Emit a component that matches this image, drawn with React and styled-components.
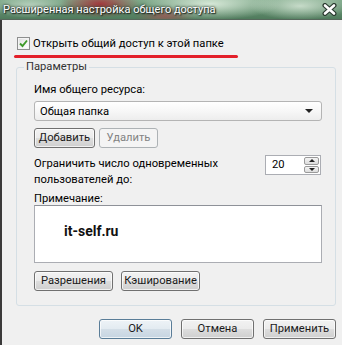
import React from "react";
import styled, { createGlobalStyle, css } from "styled-components";

const GlobalStyle = createGlobalStyle`
  html, body {
    margin: 0;
    padding: 0;
    background: #f0f0f0;
  }
  body {
    font-family: Roboto, "Noto Sans", "Liberation Sans", sans-serif;
    font-size: 11.2px;
    color: #000;
  }
`;

const Window = styled.div`
  width: 342px;
  height: 345px;
  display: flex;
  flex-direction: column;
  overflow: hidden;
`;

const TitleBar = styled.div`
  height: 19px;
  border-bottom: 1px solid #56675b;
  display: flex;
  align-items: center;
  justify-content: space-between;
  padding: 0 5px 0 3px;
  background:
    radial-gradient(ellipse 40px 14px at 100px 4px, rgba(170, 40, 50, 0.85), transparent),
    radial-gradient(ellipse 30px 10px at 165px 16px, rgba(190, 70, 80, 0.55), transparent),
    radial-gradient(ellipse 70px 16px at 210px 4px, rgba(225, 240, 225, 0.9), transparent),
    radial-gradient(ellipse 50px 14px at 300px 6px, rgba(220, 235, 220, 0.8), transparent),
    radial-gradient(ellipse 40px 12px at 30px 6px, rgba(200, 222, 205, 0.85), transparent),
    linear-gradient(180deg, #7fa98a 0%, #5f8c6c 60%, #4f7a5c 100%);
`;

const Title = styled.span`
  font-size: 11px;
  line-height: 19px;
  color: #fff;
  text-shadow: 0 0 2px #2b3a30, 0 0 3px #2b3a30, 1px 1px 1px #1f2a22;
  white-space: nowrap;
`;

const Body = styled.div`
  flex: 1;
  display: flex;
  flex-direction: column;
  padding: 17px 6px 0 15px;
  border-left: 2px solid #3b3a3a;
`;

const CheckRow = styled.label`
  display: flex;
  align-items: center;
  height: 13px;
  gap: 3px;
`;

const CheckBox = styled.span`
  width: 11px;
  height: 11px;
  border: 1px solid #8e8f8f;
  background: linear-gradient(135deg, #dcdcdc 0%, #f6f6f6 60%, #ffffff 100%);
  box-shadow: inset 0 0 0 1px #f4f4f4;
  display: flex;
  align-items: center;
  justify-content: center;
`;

const CheckText = styled.span`
  font-size: 11.2px;
  line-height: 13px;
  white-space: nowrap;
`;

const RedLine = styled.div`
  width: 224px;
  height: 3px;
  margin: 5px 0 0 -3px;
  border-radius: 2px;
  background: #e3202a;
`;

const Group = styled.fieldset`
  margin: 2px 0 0 -1px;
  padding: 0;
  border: 1px solid #d5dfe5;
  border-radius: 3px;
  min-width: 0;
`;

const Legend = styled.legend`
  margin-left: 7px;
  padding: 0 2px;
  line-height: 14px;
  color: #333;
`;

const Inner = styled.div`
  display: flex;
  flex-direction: column;
  padding: 8px 13px 14px 17px;
`;

const Label = styled.div`
  line-height: ${(p) => p.$lh || 16}px;
  margin-top: ${(p) => p.$mt || 0}px;
`;

const Combo = styled.div`
  height: 18px;
  margin-top: 3px;
  border: 1px solid #b4b4b4;
  border-radius: 3px;
  background: linear-gradient(180deg, #ffffff 0%, #f7f7f7 50%, #ededed 100%);
  display: flex;
  align-items: center;
  justify-content: space-between;
  padding: 0 8px 0 5px;
`;

const Arrow = styled.span`
  width: 0;
  height: 0;
  border-left: 4px solid transparent;
  border-right: 4px solid transparent;
  border-top: 4px solid #222;
`;

const ButtonRow = styled.div`
  display: flex;
  gap: ${(p) => p.$gap || 4}px;
  margin-top: ${(p) => p.$mt || 0}px;
  justify-content: ${(p) => (p.$end ? "flex-end" : "flex-start")};
`;

const Button = styled.button`
  height: 20px;
  width: ${(p) => p.$w}px;
  padding: 0;
  font-family: inherit;
  font-size: 11.2px;
  line-height: 18px;
  color: #1a1a1a;
  border: 1px solid #707070;
  border-radius: 3px;
  background: linear-gradient(180deg, #f2f2f2 0%, #ebebeb 48%, #dddddd 52%, #cfcfcf 100%);
  box-shadow: inset 0 0 0 1px rgba(255, 255, 255, 0.7);
  ${(p) =>
    p.disabled &&
    css`
      border-color: #adb2b5;
      background: #f4f4f4;
      color: #838383;
      box-shadow: none;
    `}
  ${(p) =>
    p.$default &&
    css`
      border-color: #5a7d98;
      background: linear-gradient(180deg, #eef3f7 0%, #e3ebf1 48%, #d3dee7 52%, #c6d5e2 100%);
    `}
`;

const LimitRow = styled.div`
  display: flex;
  justify-content: space-between;
  align-items: flex-start;
  margin-top: 7px;
  height: 32px;
`;

const LimitText = styled.div`
  line-height: 16px;
  margin-top: 1px;
`;

const Spin = styled.div`
  width: 54px;
  height: 18px;
  border: 1px solid #abadb3;
  background: #fff;
  display: flex;
  margin-right: 1px;
`;

const SpinValue = styled.div`
  flex: 1;
  padding-left: 6px;
  line-height: 18px;
`;

const SpinButtons = styled.div`
  width: 15px;
  display: flex;
  flex-direction: column;
  gap: 1px;
  padding: 1px 1px 1px 0;
`;

const SpinBtn = styled.div`
  flex: 1;
  border: 1px solid #9a9a9a;
  border-radius: 2px;
  background: linear-gradient(180deg, #f4f4f4, #dcdcdc);
  display: flex;
  align-items: center;
  justify-content: center;
`;

const SpinTri = styled.span`
  width: 0;
  height: 0;
  border-left: 3px solid transparent;
  border-right: 3px solid transparent;
  ${(p) =>
    p.$up
      ? css`border-bottom: 3px solid #222;`
      : css`border-top: 3px solid #222;`}
`;

const Note = styled.div`
  height: 56px;
  border: 1px solid #abadb3;
  border-top-color: #8e9198;
  background: #fff;
  padding: 0 0 0 29px;
`;

const NoteText = styled.div`
  font-size: 14px;
  font-weight: bold;
  line-height: 18px;
  margin-top: 16px;
  color: #111;
`;

const Close = styled.svg`
  display: block;
`;

export default function App() {
  return (
    <>
      <GlobalStyle />
      <Window>
        <TitleBar>
          <Title>Расширенная настройка общего доступа</Title>
          <Close width="15" height="13" viewBox="0 0 15 13">
            <path d="M3 2.5 L12 10.5 M12 2.5 L3 10.5" stroke="#2b3a30" strokeWidth="5" strokeLinecap="round" />
            <path d="M3 2.5 L12 10.5 M12 2.5 L3 10.5" stroke="#fff" strokeWidth="2.6" strokeLinecap="round" />
          </Close>
        </TitleBar>
        <Body>
          <CheckRow>
            <CheckBox>
              <svg width="9" height="9" viewBox="0 0 9 9">
                <path d="M1 4.5 L3.5 7 L8 1.5" fill="none" stroke="#3f9a2a" strokeWidth="1.9" />
              </svg>
            </CheckBox>
            <CheckText>Открыть общий доступ к этой папке</CheckText>
          </CheckRow>
          <RedLine />
          <Group>
            <Legend>Параметры</Legend>
            <Inner>
              <Label>Имя общего ресурса:</Label>
              <Combo>
                <span>Общая папка</span>
                <Arrow />
              </Combo>
              <ButtonRow $mt={7}>
                <Button $w={61}>Добавить</Button>
                <Button $w={59} disabled>
                  Удалить
                </Button>
              </ButtonRow>
              <LimitRow>
                <LimitText>
                  Ограничить число одновременных
                  <br />
                  пользователей до:
                </LimitText>
                <Spin>
                  <SpinValue>20</SpinValue>
                  <SpinButtons>
                    <SpinBtn>
                      <SpinTri $up />
                    </SpinBtn>
                    <SpinBtn>
                      <SpinTri />
                    </SpinBtn>
                  </SpinButtons>
                </Spin>
              </LimitRow>
              <Label $lh={13} $mt={5}>
                Примечание:
              </Label>
              <Note>
                <NoteText>it-self.ru</NoteText>
              </Note>
              <ButtonRow $mt={8} $gap={8}>
                <Button $w={79}>Разрешения</Button>
                <Button $w={79}>Кэширование</Button>
              </ButtonRow>
            </Inner>
          </Group>
          <ButtonRow $mt={13} $gap={9} $end>
            <Button $w={73} $default>
              OK
            </Button>
            <Button $w={73}>Отмена</Button>
            <Button $w={73}>Применить</Button>
          </ButtonRow>
        </Body>
      </Window>
    </>
  );
}
